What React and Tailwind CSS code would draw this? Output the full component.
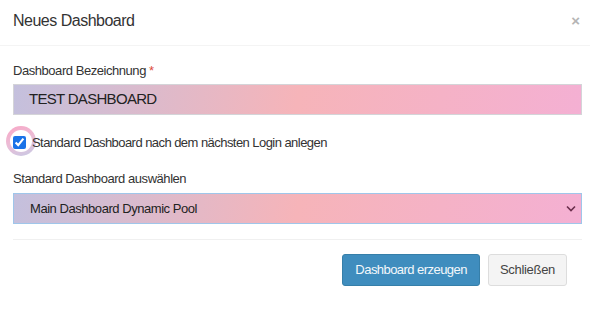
export default function App() {
  const field =
    "w-full bg-[linear-gradient(100deg,#c4c0dd_0%,#f6b4b9_50%,#f4b0d3_100%)] text-[#222]";

  return (
    <div className="w-[590px] h-[309px] bg-white font-['Liberation_Sans',Arial,sans-serif] text-[#333]">
      <div className="h-[46px] px-[13px] pb-[4px] flex items-center justify-between border-b border-[#f4f4f4]">
        <h4 className="text-[16px] tracking-[-0.5px] leading-none">Neues Dashboard</h4>
        <button className="text-[#b5b5b5] text-[15px] font-bold leading-none mr-[-3px]">×</button>
      </div>

      <div className="pl-[13px] pr-[8px] pt-[16px] pb-[15px]">
        <label className="block text-[13px] tracking-[-0.45px] leading-[18px] mb-[4px]">
          Dashboard Bezeichnung <span className="text-[#dd4b39]">*</span>
        </label>
        <div className={`${field} h-[31px] border border-[#d4d4d8] px-[15px] flex items-center text-[15px] tracking-[-0.7px]`}>
          TEST DASHBOARD
        </div>

        <div className="relative flex items-center h-[16px] mt-[19px]">
          <span className="absolute left-[-7px] top-[-8px] w-[30px] h-[30px] rounded-full bg-[linear-gradient(160deg,#f5a2c3_10%,#e9b6d2_50%,#c8c1df_90%)] opacity-90" />
          <span className="absolute left-[-3px] top-[-4px] w-[22px] h-[22px] rounded-full bg-white" />
          <input
            type="checkbox"
            defaultChecked
            className="relative w-[13px] h-[13px] m-0 accent-[#1a73e8]"
          />
          <span className="relative ml-[6px] text-[13px] tracking-[-0.55px] leading-none">
            Standard Dashboard nach dem nächsten Login anlegen
          </span>
        </div>

        <label className="block text-[13px] tracking-[-0.45px] leading-[18px] mt-[20px] mb-[5px]">
          Standard Dashboard auswählen
        </label>
        <div className={`${field} h-[31px] border border-[#9fc6ea] pl-[16px] pr-[5px] flex items-center justify-between text-[13px] tracking-[-0.45px]`}>
          <span>Main Dashboard Dynamic Pool</span>
          <svg width="10" height="7" viewBox="0 0 10 7" fill="none" stroke="#6a2e4c" strokeWidth="1.6">
            <path d="M1 1.5l4 4 4-4" />
          </svg>
        </div>

        <div className="border-b border-[#f0f0f0] mt-[15px]" />
      </div>

      <div className="flex justify-end gap-[8px] pr-[23px] mt-[-1px]">
        <button className="h-[32px] px-[12px] rounded-[3px] bg-[#3f8dbe] border border-[#367fa9] text-[#f4f8fb] text-[13px] tracking-[-0.55px]">
          Dashboard erzeugen
        </button>
        <button className="h-[32px] px-[11px] rounded-[3px] bg-[#f4f4f4] border border-[#ddd] text-[#444] text-[13px] tracking-[-0.3px]">
          Schließen
        </button>
      </div>
    </div>
  );
}
